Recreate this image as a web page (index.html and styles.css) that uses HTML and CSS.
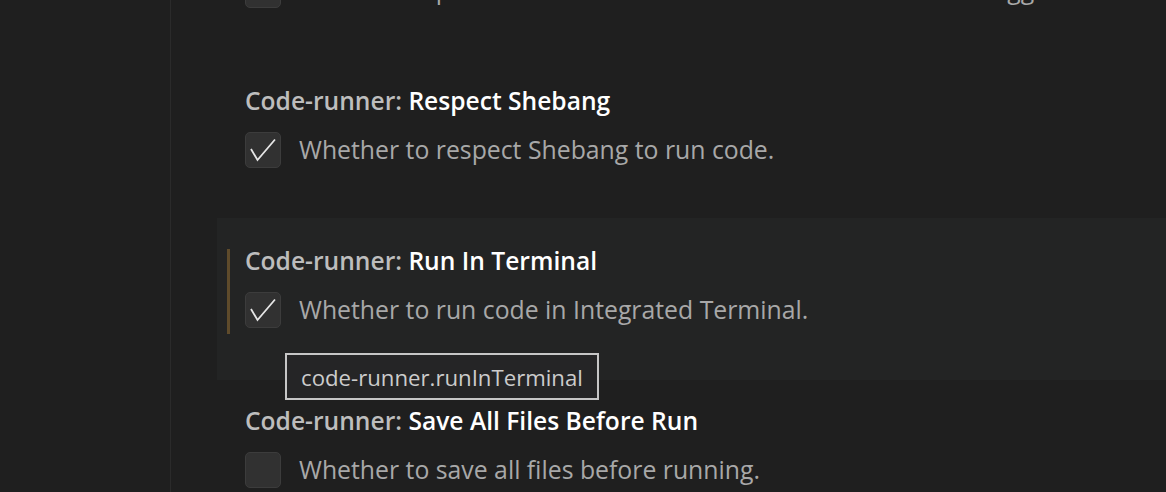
FILE: index.html
```html
<!DOCTYPE html>
<html>
<head>
<meta charset="utf-8">
<link rel="stylesheet" href="styles.css">
</head>
<body>
<div class="layout">
  <aside class="toc"></aside>
  <main class="list">
    <div class="row">
      <div class="title"><span class="cat">Code-runner: </span><span class="name">Preserve Focus</span></div>
      <div class="control">
        <span class="checkbox"></span>
        <span class="desc">Whether to preserve focus on code editor after code run is triggered.</span>
      </div>
    </div>
    <div class="row">
      <div class="title"><span class="cat">Code-runner: </span><span class="name">Respect Shebang</span></div>
      <div class="control">
        <span class="checkbox"><svg viewBox="0 0 36 36" width="36" height="36"><path d="M6 17 L12.5 28 L30 7.5" fill="none" stroke="#e6e6e6" stroke-width="1.8"/></svg></span>
        <span class="desc">Whether to respect Shebang to run code.</span>
      </div>
    </div>
    <div class="row hover">
      <span class="focus-bar"></span>
      <div class="title"><span class="cat">Code-runner: </span><span class="name">Run In Terminal</span></div>
      <div class="control">
        <span class="checkbox"><svg viewBox="0 0 36 36" width="36" height="36"><path d="M6 17 L12.5 28 L30 7.5" fill="none" stroke="#e6e6e6" stroke-width="1.8"/></svg></span>
        <span class="desc">Whether to run code in Integrated Terminal.</span>
      </div>
      <div class="tooltip">code-runner.runInTerminal</div>
    </div>
    <div class="row">
      <div class="title"><span class="cat">Code-runner: </span><span class="name">Save All Files Before Run</span></div>
      <div class="control">
        <span class="checkbox"></span>
        <span class="desc">Whether to save all files before running.</span>
      </div>
    </div>
  </main>
</div>
</body>
</html>
```
FILE: styles.css
```css
html, body {
  margin: 0;
  padding: 0;
  background: #1f1f1f;
  height: 100%;
  overflow: hidden;
}
body {
  font-family: "Open Sans", "Noto Sans", sans-serif;
}
.layout {
  display: flex;
  height: 492px;
  overflow: hidden;
}
.toc {
  width: 170px;
  flex: 0 0 170px;
  border-right: 1px solid #2b2b2b;
}
.list {
  flex: 1;
  margin-top: -102px;
  padding-left: 46px;
  display: flex;
  flex-direction: column;
}
.row {
  position: relative;
  height: 160px;
  box-sizing: border-box;
  padding: 27px 0 0 28px;
  flex: 0 0 auto;
}
.row.hover {
  background: #232424;
  height: 162px;
  margin-bottom: -2px;
}
.focus-bar {
  position: absolute;
  left: 10px;
  top: 31px;
  width: 3px;
  height: 85px;
  background: #5f4b2b;
}
.title {
  font-size: 24.6px;
  line-height: 32px;
  font-weight: 600;
  white-space: nowrap;
}
.cat { color: #bdbdbd; }
.name { color: #ffffff; }
.control {
  display: flex;
  align-items: center;
  gap: 18px;
  margin-top: 15px;
}
.checkbox {
  width: 34px;
  height: 34px;
  border: 1px solid #3c3c3c;
  background: #313131;
  border-radius: 5px;
  flex: 0 0 auto;
  position: relative;
}
.checkbox svg {
  position: absolute;
  left: -1px;
  top: -1px;
}
.desc {
  font-size: 24.8px;
  line-height: 34px;
  color: #a8a8a8;
  white-space: nowrap;
  margin-top: -2px;
}
.tooltip {
  position: absolute;
  left: 68px;
  top: 135px;
  height: 43px;
  line-height: 45px;
  padding: 0 14px;
  border: 2px solid #c6c6c6;
  background: #252526;
  color: #cccccc;
  font-size: 22.2px;
  white-space: nowrap;
  z-index: 2;
}
```
